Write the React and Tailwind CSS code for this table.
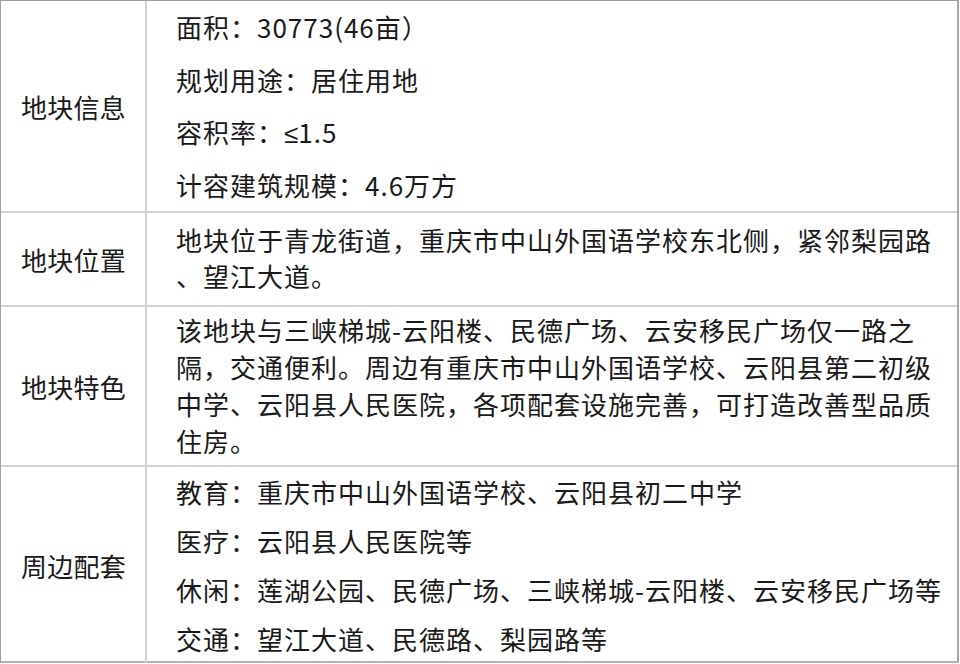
import React from "react";

const font = "font-['Noto_Sans_CJK_SC','Noto_Sans',sans-serif]";

function Label({ children }) {
  return (
    <div className="w-[146px] shrink-0 border-r-2 border-[#d2d2d2] flex items-center justify-center">
      <span className="pl-[1px] tracking-[0.2px]">{children}</span>
    </div>
  );
}

export default function App() {
  return (
    <div className={`bg-white w-[960px] h-[664px] ${font} text-[26px] text-[#1a1a1a]`}>
      <div className="w-[959px] h-[663px] border-t border-l border-[#9e9e9e] border-r-2 border-b-2 border-r-[#a8a8a8] border-b-[#b4b4b4] flex flex-col">
        <div className="h-[212px] shrink-0 flex border-b-2 border-[#d2d2d2]">
          <Label>地块信息</Label>
          <div className="pl-[29px] flex flex-col tracking-[1px]">
            <div className="h-[52.5px] leading-[52.5px] whitespace-nowrap">面积：30773(46亩）</div>
            <div className="h-[52.5px] leading-[52.5px] whitespace-nowrap">规划用途：居住用地</div>
            <div className="h-[52.5px] leading-[52.5px] whitespace-nowrap overflow-hidden">
              容积率：<span className="font-['Liberation_Sans',sans-serif] tracking-normal leading-none">≤</span>1.5
            </div>
            <div className="h-[52.5px] leading-[52.5px] whitespace-nowrap">计容建筑规模：4.6万方</div>
          </div>
        </div>
        <div className="h-[94px] shrink-0 flex border-b-2 border-[#d2d2d2]">
          <Label>地块位置</Label>
          <div className="pl-[29px] pt-[9px] flex flex-col leading-[36px] whitespace-nowrap tracking-[1px]">
            <div>地块位于青龙街道，重庆市中山外国语学校东北侧，紧邻梨园路</div>
            <div>、望江大道。</div>
          </div>
        </div>
        <div className="h-[160px] shrink-0 flex border-b-2 border-[#d2d2d2]">
          <Label>地块特色</Label>
          <div className="pl-[29px] pt-[4px] flex flex-col leading-[37px] whitespace-nowrap tracking-[1px]">
            <div>该地块与三峡梯城-云阳楼、民德广场、云安移民广场仅一路之</div>
            <div>隔，交通便利。周边有重庆市中山外国语学校、云阳县第二初级</div>
            <div>中学、云阳县人民医院，各项配套设施完善，可打造改善型品质</div>
            <div>住房。</div>
          </div>
        </div>
        <div className="flex-1 flex">
          <Label>周边配套</Label>
          <div className="pl-[29px] flex flex-col tracking-[1px]">
            <div className="leading-[49px] whitespace-nowrap">教育：重庆市中山外国语学校、云阳县初二中学</div>
            <div className="leading-[49px] whitespace-nowrap">医疗：云阳县人民医院等</div>
            <div className="leading-[49px] whitespace-nowrap">休闲：莲湖公园、民德广场、三峡梯城-云阳楼、云安移民广场等</div>
            <div className="leading-[49px] whitespace-nowrap">交通：望江大道、民德路、梨园路等</div>
          </div>
        </div>
      </div>
    </div>
  );
}
